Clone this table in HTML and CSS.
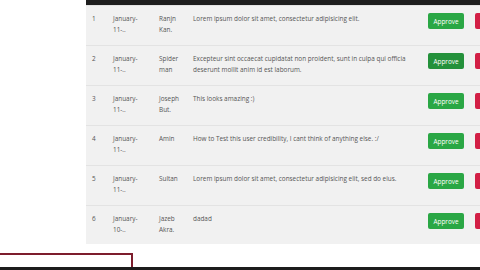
FILE: index.html
```html
<!DOCTYPE html>
<html>
<head>
<meta charset="utf-8">
<link rel="stylesheet" href="styles.css">
</head>
<body>
<div class="page">
  <div class="table">
    <div class="thead"></div>
    <div class="row">
      <div class="c num">1</div>
      <div class="c date">January-<br>11-..</div>
      <div class="c name">Ranjn<br>Kan.</div>
      <div class="c text">Lorem ipsum dolor sit amet, consectetur adipisicing elit.</div>
      <div class="c act"><span class="btn ok">Approve</span><span class="btn no"></span></div>
    </div>
    <div class="row">
      <div class="c num">2</div>
      <div class="c date">January-<br>11-..</div>
      <div class="c name">Spider<br>man</div>
      <div class="c text">Excepteur sint occaecat cupidatat non proident, sunt in culpa qui officia deserunt mollit anim id est laborum.</div>
      <div class="c act"><span class="btn ok hover">Approve</span><span class="btn no"></span></div>
    </div>
    <div class="row">
      <div class="c num">3</div>
      <div class="c date">January-<br>11-..</div>
      <div class="c name">Joseph<br>But.</div>
      <div class="c text">This looks amazing :)</div>
      <div class="c act"><span class="btn ok">Approve</span><span class="btn no"></span></div>
    </div>
    <div class="row">
      <div class="c num">4</div>
      <div class="c date">January-<br>11-..</div>
      <div class="c name">Amin</div>
      <div class="c text">How to Test this user credibility, I cant think of anything else. :/</div>
      <div class="c act"><span class="btn ok">Approve</span><span class="btn no"></span></div>
    </div>
    <div class="row">
      <div class="c num">5</div>
      <div class="c date">January-<br>11-..</div>
      <div class="c name">Sultan</div>
      <div class="c text">Lorem ipsum dolor sit amet, consectetur adipisicing elit, sed do eius.</div>
      <div class="c act"><span class="btn ok">Approve</span><span class="btn no"></span></div>
    </div>
    <div class="row last">
      <div class="c num">6</div>
      <div class="c date">January-<br>10-..</div>
      <div class="c name">Jazeb<br>Akra.</div>
      <div class="c text">dadad</div>
      <div class="c act"><span class="btn ok">Approve</span><span class="btn no"></span></div>
    </div>
  </div>
  <div class="footer">
    <div class="redbox"></div>
  </div>
  <div class="bottombar"></div>
</div>
</body>
</html>
```
FILE: styles.css
```css
html, body {
  margin: 0;
  padding: 0;
  background: #ffffff;
  overflow: hidden;
}
.page {
  width: 480px;
  height: 270px;
  overflow: hidden;
  display: flex;
  flex-direction: column;
  font-family: "Open Sans", "Noto Sans", sans-serif;
  font-size: 6.4px;
  color: #555555;
}
.table {
  margin-left: 86px;
  width: 420px;
  background: #f1f1f1;
}
.thead {
  height: 5px;
  background: #1e1e1e;
}
.row {
  display: grid;
  grid-template-columns: 21px 46px 34px 235px 80px;
  height: 40px;
  box-sizing: border-box;
  border-top: 1px solid #e3e3e3;
}
.row:first-of-type { border-top: none; }
.row.last { height: 39px; }
.c {
  padding: 7px 0 0 6px;
  line-height: 11px;
  overflow: hidden;
}
.text { padding-right: 4px; }
.act {
  display: flex;
  align-items: flex-start;
  gap: 11px;
  padding-top: 7px;
}
.btn {
  display: inline-flex;
  align-items: center;
  justify-content: center;
  height: 16px;
  width: 36px;
  border-radius: 2px;
  color: #ffffff;
  font-size: 6.4px;
  flex: none;
}
.ok { background: #2aa745; }
.ok.hover { background: #24913b; }
.no { background: #d21f45; }
.footer {
  flex: 1;
  display: flex;
  align-items: flex-end;
}
.redbox {
  width: 131px;
  height: 12px;
  border-top: 2px solid #7d1d2d;
  border-right: 2px solid #7d1d2d;
}
.bottombar {
  height: 3px;
  background: #1c1c1c;
}
```
